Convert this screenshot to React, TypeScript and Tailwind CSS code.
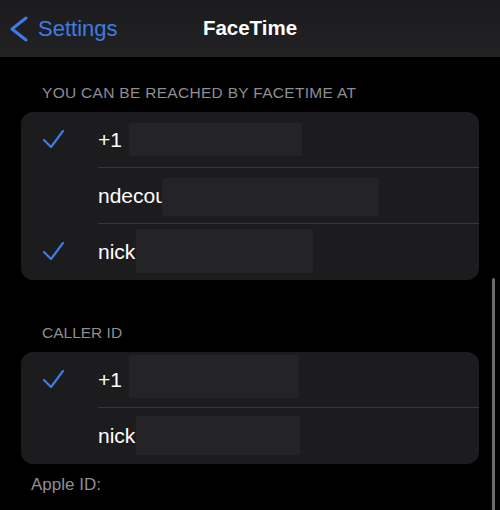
import type { ReactNode } from "react";

const font = { fontFamily: '"Liberation Sans", Arial, sans-serif' };

function Check() {
  return (
    <svg width="22" height="20" viewBox="0 0 22 20" fill="none" className="shrink-0">
      <polyline points="1,10 8,17 20,1" stroke="#3e7be6" strokeWidth="2.2" strokeLinecap="round" strokeLinejoin="round" />
    </svg>
  );
}

function Row({ checked, last, children }: { checked?: boolean; last?: boolean; children: ReactNode }) {
  return (
    <div className="flex h-[56px] items-stretch">
      <div className="flex w-[77px] shrink-0 items-center pl-[22px]">{checked && <Check />}</div>
      <div className={`flex flex-1 items-center ${last ? "" : "border-b border-[#38383a]"}`}>{children}</div>
    </div>
  );
}

function Redact({ w, h, ml = 0, dy = 0 }: { w: number; h: number; ml?: number; dy?: number }) {
  return (
    <div
      className="shrink-0 rounded-[2px] bg-[#242426]"
      style={{ width: w, height: h, marginLeft: ml, transform: `translateY(${dy}px)` }}
    />
  );
}

export default function App() {
  return (
    <div className="relative h-[510px] w-[500px] overflow-hidden bg-black text-white" style={font}>
      <div className="relative flex h-[57px] items-center bg-gradient-to-b from-[#1b1b1d] to-[#222224]">
        <div className="flex items-center pl-[9px] text-[#3e7be6]">
          <svg width="20" height="26" viewBox="0 0 20 26" fill="none">
            <polyline points="17,2 3,13 17,24" stroke="#3e7be6" strokeWidth="3" strokeLinecap="round" strokeLinejoin="round" />
          </svg>
          <span className="ml-[9px] text-[22px]">Settings</span>
        </div>
        <div className="absolute left-0 right-0 text-center text-[20.5px] font-bold">FaceTime</div>
      </div>

      <div className="mt-[26px] pl-[42px] text-[15.5px] leading-[20px] tracking-[0.3px] text-[#8d8d93]">YOU CAN BE REACHED BY FACETIME AT</div>
      <div className="mx-[21px] mt-[9px] overflow-hidden rounded-[12px] bg-[#1c1c1e] text-[21px]">
        <Row checked>
          <span>+1</span>
          <Redact w={173} h={33} ml={7} />
        </Row>
        <Row>
          <span>ndecou</span>
          <Redact w={217} h={38} ml={-5} dy={1} />
        </Row>
        <Row checked last>
          <span>nick</span>
          <Redact w={177} h={44} ml={1} dy={-1} />
        </Row>
      </div>

      <div className="mt-[43px] pl-[42px] text-[15.5px] leading-[20px] text-[#8d8d93]">CALLER ID</div>
      <div className="mx-[21px] mt-[9px] overflow-hidden rounded-[12px] bg-[#1c1c1e] text-[21px]">
        <Row checked>
          <span>+1</span>
          <Redact w={170} h={43} ml={7} dy={-3} />
        </Row>
        <Row last>
          <span>nick</span>
          <Redact w={164} h={39} ml={1} dy={-1} />
        </Row>
      </div>

      <div className="mt-[10px] pl-[31px] text-[17px] leading-[22px] text-[#8e8e93]">Apple ID:</div>

      <div className="absolute left-[492px] top-[278px] h-[240px] w-[3px] rounded-full bg-[#6a6a6c]" />
    </div>
  );
}
